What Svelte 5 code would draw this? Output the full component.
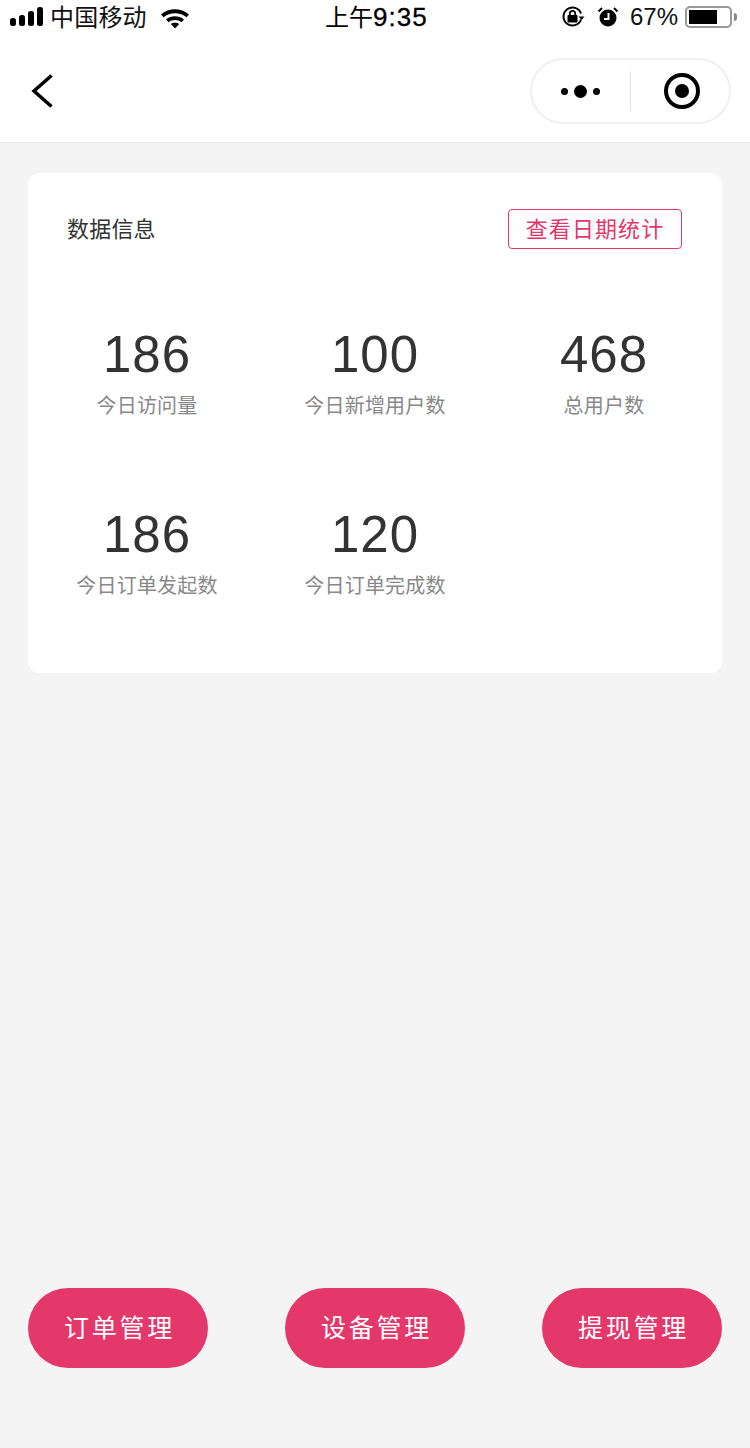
<script>
	const stats = [
		{ value: '186', label: '今日访问量' },
		{ value: '100', label: '今日新增用户数' },
		{ value: '468', label: '总用户数' },
		{ value: '186', label: '今日订单发起数' },
		{ value: '120', label: '今日订单完成数' }
	];
	const actions = ['订单管理', '设备管理', '提现管理'];
</script>

<div class="page">
	<header class="top">
		<div class="status">
			<div class="side left">
				<svg class="signal" width="34" height="22" viewBox="0 0 34 22">
					<rect x="0" y="11" width="6" height="8" rx="2.500" />
					<rect x="9" y="8" width="6" height="11" rx="2.500" />
					<rect x="18" y="4" width="6" height="15" rx="2.500" />
					<rect x="27" y="0" width="6" height="19" rx="2.500" />
				</svg>
				<span class="carrier">中国移动</span>
				<svg class="wifi" width="30" height="22" viewBox="0 0 30 22">
					<path d="M1 7.500C8.500 0.500 21 0.500 29 7.500L26.500 10.300C20 4.800 10 4.800 3.500 10.300Z" />
					<path d="M6 12.500C11 8.200 19 8.200 24 12.500L21.500 15.200C18 12.300 12 12.300 8.500 15.200Z" />
					<path d="M10.800 17C13 15.300 17 15.300 19.200 17L15 21.500Z" />
				</svg>
			</div>
			<span class="time"><span class="time-cjk">上午</span><span class="time-num">9:35</span></span>
			<div class="side right">
				<svg class="lock" width="24" height="24" viewBox="0 0 24 24">
					<path class="ring" d="M20 14.500A9 9 0 1 1 20 8.500" />
					<path class="solid" d="M17.500 11.500h6l-3 3.500z" />
					<rect class="solid" x="6.500" y="10" width="10" height="7.500" rx="1" />
					<path class="ring thin" d="M8.800 10V8.500a2.700 2.700 0 0 1 5.400 0V10" />
				</svg>
				<svg class="alarm" width="22" height="22" viewBox="0 0 22 22">
					<circle class="solid" cx="11" cy="12" r="8.500" />
					<path class="hand" d="M11.500 7v6H7" />
					<path class="ring" d="M1.500 5.500L5 2M20.500 5.500L17 2" />
				</svg>
				<span class="battery-pct">67%</span>
				<div class="battery">
					<div class="battery-fill"></div>
				</div>
				<div class="battery-tip"></div>
			</div>
		</div>
		<div class="nav">
			<svg class="back" width="26" height="38" viewBox="0 0 26 38">
				<path d="M23.500 3.500L6 19L23.500 34.500" />
			</svg>
			<div class="capsule">
				<div class="dots">
					<span class="dot"></span>
					<span class="dot big"></span>
					<span class="dot"></span>
				</div>
				<div class="divider"></div>
				<div class="target"><span class="target-core"></span></div>
			</div>
		</div>
	</header>

	<main class="content">
		<section class="card">
			<div class="card-head">
				<span class="card-title">数据信息</span>
				<button class="date-btn">查看日期统计</button>
			</div>
			<div class="stats">
				{#each stats as stat}
					<div class="stat">
						<div class="stat-value">{stat.value}</div>
						<div class="stat-label">{stat.label}</div>
					</div>
				{/each}
			</div>
		</section>

		<div class="actions">
			{#each actions as action}
				<button class="action">{action}</button>
			{/each}
		</div>
	</main>
</div>

<style>
	:global(body) {
		margin: 0;
		background: #f4f4f4;
	}

	.page {
		width: 750px;
		height: 1448px;
		display: flex;
		flex-direction: column;
		font-family: 'Liberation Sans', 'Noto Sans CJK SC', sans-serif;
		background: #f4f4f4;
		overflow: hidden;
	}

	.top {
		height: 142px;
		flex: none;
		background: #fff;
		border-bottom: 1px solid #e5e5e5;
	}

	.status {
		height: 34px;
		display: flex;
		align-items: center;
		justify-content: space-between;
		position: relative;
		color: #000;
	}

	.side {
		display: flex;
		align-items: center;
	}

	.left {
		padding-left: 10px;
		padding-top: 2px;
	}

	.right {
		padding-right: 13px;
	}

	.signal rect,
	.wifi path,
	.solid {
		fill: #000;
	}

	.carrier {
		font-size: 24px;
		letter-spacing: 0.200px;
		margin-left: 6px;
		padding-bottom: 6px;
		color: #111;
	}

	.wifi {
		margin-left: 13px;
	}

	.time {
		position: absolute;
		left: 325px;
		top: 0;
		line-height: 34px;
		display: flex;
		align-items: baseline;
	}

	.time-cjk {
		font-size: 24px;
	}

	.time-num {
		font-size: 26px;
		letter-spacing: 1px;
		-webkit-text-stroke: 0.300px #000;
	}

	.ring {
		fill: none;
		stroke: #000;
		stroke-width: 2;
	}

	.thin {
		stroke-width: 1.800;
	}

	.hand {
		fill: none;
		stroke: #fff;
		stroke-width: 2;
	}

	.alarm {
		margin-left: 12px;
	}

	.battery-pct {
		font-size: 24px;
		margin-left: 11px;
		color: #111;
	}

	.battery {
		margin-left: 7px;
		border: 2px solid #999;
		border-radius: 5px;
		padding: 2px;
		width: 39px;
		height: 14px;
	}

	.battery-fill {
		width: 28px;
		height: 14px;
		background: #000;
	}

	.battery-tip {
		width: 3px;
		height: 8px;
		margin-left: 2px;
		background: #888;
		border-radius: 0 3px 3px 0;
	}

	.nav {
		height: 108px;
		box-sizing: border-box;
		padding: 6px 19px 0 28px;
		display: flex;
		align-items: center;
		justify-content: space-between;
	}

	.back path {
		fill: none;
		stroke: #000;
		stroke-width: 3.500;
	}

	.capsule {
		width: 201px;
		height: 66px;
		box-sizing: border-box;
		border: 2px solid #efefef;
		border-radius: 33px;
		display: flex;
		align-items: center;
	}

	.dots {
		width: 96px;
		margin-right: 2px;
		display: flex;
		align-items: center;
		justify-content: center;
		gap: 6px;
	}

	.dot {
		width: 7px;
		height: 7px;
		border-radius: 50%;
		background: #000;
	}

	.dot.big {
		width: 13px;
		height: 13px;
	}

	.divider {
		width: 1px;
		height: 40px;
		background: #e2e2e2;
	}

	.target {
		width: 36px;
		height: 36px;
		box-sizing: border-box;
		margin-left: 33px;
		border: 4px solid #000;
		border-radius: 50%;
		display: flex;
		align-items: center;
		justify-content: center;
	}

	.target-core {
		width: 14px;
		height: 14px;
		border-radius: 50%;
		background: #000;
	}

	.content {
		flex: 1;
		display: flex;
		flex-direction: column;
		padding: 30px 28px 80px;
		justify-content: space-between;
	}

	.card {
		height: 500px;
		box-sizing: border-box;
		background: #fff;
		border-radius: 12px;
		padding: 36px 40px 0;
	}

	.card-head {
		display: flex;
		align-items: center;
		justify-content: space-between;
	}

	.card-title {
		font-size: 22px;
		letter-spacing: 0.200px;
		color: #333;
		margin-left: -1px;
		padding-bottom: 4px;
	}

	.date-btn {
		width: 174px;
		height: 40px;
		padding: 0 0 4px;
		background: #fff;
		border: 1px solid #e4376a;
		border-radius: 4px;
		color: #e4376a;
		font: inherit;
		font-size: 22px;
		letter-spacing: 1.100px;
	}

	.stats {
		display: grid;
		grid-template-columns: 228px 228px 230px;
		grid-auto-rows: 180px;
		margin: 0 0 0 -35px;
		padding-top: 78px;
	}

	.stat {
		text-align: center;
	}

	.stat-value {
		font-size: 51px;
		line-height: 56px;
		color: #333;
		letter-spacing: 1px;
	}

	.stat-label {
		font-size: 20px;
		line-height: 30px;
		margin-top: 8px;
		color: #888;
		letter-spacing: 0.200px;
	}

	.actions {
		display: flex;
		justify-content: space-between;
	}

	.action {
		width: 180px;
		height: 80px;
		padding: 0 0 4px 3px;
		border: none;
		border-radius: 40px;
		background: #e4376a;
		color: #fff;
		font: inherit;
		font-size: 25px;
		letter-spacing: 2.700px;
	}
</style>
